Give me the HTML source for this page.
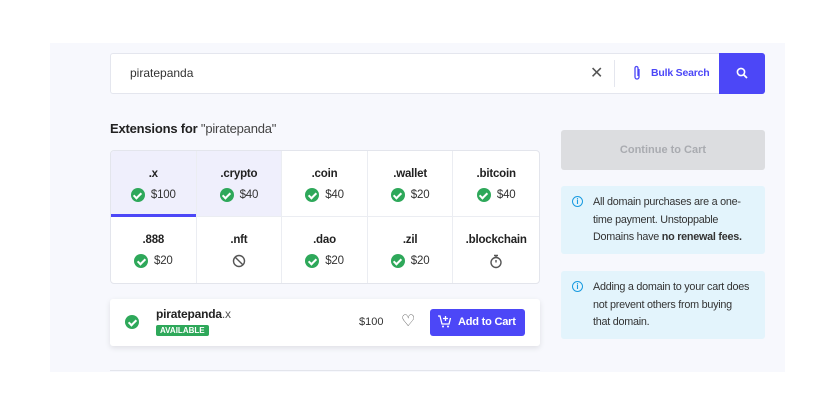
<!DOCTYPE html>
<html><head><style>
*{box-sizing:border-box;margin:0;padding:0}
body{width:827px;height:420px;background:#fff;font-family:"Liberation Sans",sans-serif;position:relative;overflow:hidden;color:#222}
.panel{position:absolute;left:50px;top:43px;width:735px;height:329px;background:#f7f8fd}
.abs{position:absolute}
.search{left:110px;top:53px;width:655px;height:41px;background:#fff;border:1px solid #e4e6ee;border-radius:3px}
.sbtn{left:719px;top:53px;width:46px;height:41px;background:#4c47f7;border-radius:0 3px 3px 0}
.grid{left:110px;top:150px;width:430px;height:134px;background:#fff;border:1px solid #e3e5ec;border-radius:4px;display:grid;grid-template-columns:repeat(5,1fr);grid-template-rows:66px 66px;overflow:hidden}
.c{border-right:1px solid #ebedf2;border-bottom:1px solid #ebedf2;text-align:center;padding-top:17px;font-size:11.5px;font-weight:bold;position:relative;letter-spacing:-0.2px}
.c:nth-child(5n){border-right:none}
.c:nth-child(n+6){border-bottom:none}
.c.sel{background:#efeffc}
.c.u::after{content:"";position:absolute;left:0;right:0;bottom:-1px;height:3px;background:#4c47f7}
.p{margin-top:8px;font-weight:normal;font-size:11.5px;color:#333;display:flex;justify-content:center;align-items:center;gap:6px}
.ck{width:14px;height:14px;border-radius:50%;background:#2ea85a;display:inline-block;position:relative}
.ck::after{content:"";position:absolute;left:4.5px;top:2.5px;width:3px;height:6px;border:solid #fff;border-width:0 2px 2px 0;transform:rotate(45deg)}
.info{background:#e3f4fc;border-radius:3px;left:561px;width:204px;font-size:10.8px;line-height:17.5px;color:#333;padding:8px 6px 0 32px;letter-spacing:-0.25px}
.ii{position:absolute;left:11px;top:10px;width:11px;height:11px;border:1.3px solid #1a9be0;border-radius:50%;font-size:8px;line-height:9px;text-align:center;color:#1a9be0;font-weight:bold;letter-spacing:0}
</style></head><body>
<div class="panel"></div>
<div class="abs search"></div>
<div class="abs" style="left:130px;top:66px;font-size:12px;color:#333">piratepanda</div>
<div class="abs" style="left:590px;top:63px;font-size:16px;color:#555">✕</div>
<div class="abs" style="left:614px;top:60px;width:1px;height:27px;background:#e4e6ee"></div>
<svg class="abs" style="left:632px;top:65px" width="10" height="16" viewBox="0 0 10 16"><path d="M7 4v8a2 2 0 0 1-4 0V3a1.5 1.5 0 0 1 3 0v8" fill="none" stroke="#4c47f7" stroke-width="1.3"/></svg>
<div class="abs" style="left:651px;top:67px;font-size:10.5px;font-weight:bold;color:#4c47f7;letter-spacing:-0.2px">Bulk Search</div>
<div class="abs sbtn"></div>
<svg class="abs" style="left:736px;top:67px" width="12" height="12" viewBox="0 0 12 12"><circle cx="5" cy="5" r="3.6" fill="none" stroke="#fff" stroke-width="1.6"/><path d="M7.7 7.7L11 11" stroke="#fff" stroke-width="1.8"/></svg>
<div class="abs" style="left:110px;top:121px;font-size:13px;font-weight:bold;color:#222;letter-spacing:-0.2px">Extensions for <span style="font-weight:normal;color:#444">"piratepanda"</span></div>
<div class="abs grid">
<div class="c sel u">.x<div class="p"><span class="ck"></span>$100</div></div>
<div class="c sel">.crypto<div class="p"><span class="ck"></span>$40</div></div>
<div class="c">.coin<div class="p"><span class="ck"></span>$40</div></div>
<div class="c">.wallet<div class="p"><span class="ck"></span>$20</div></div>
<div class="c">.bitcoin<div class="p"><span class="ck"></span>$40</div></div>
<div class="c">.888<div class="p"><span class="ck"></span>$20</div></div>
<div class="c">.nft<div class="p"><svg width="14" height="14" viewBox="0 0 14 14"><circle cx="7" cy="7" r="5.5" fill="none" stroke="#555" stroke-width="1.4"/><path d="M3.2 3.2l7.6 7.6" stroke="#555" stroke-width="1.4"/></svg></div></div>
<div class="c">.dao<div class="p"><span class="ck"></span>$20</div></div>
<div class="c">.zil<div class="p"><span class="ck"></span>$20</div></div>
<div class="c">.blockchain<div class="p"><svg width="14" height="15" viewBox="0 0 14 15"><circle cx="7" cy="8.5" r="5" fill="none" stroke="#555" stroke-width="1.4"/><path d="M5 1.5h4M7 1.5v2M7 8.5V6" stroke="#555" stroke-width="1.4"/></svg></div></div>
</div>
<div class="abs" style="left:110px;top:299px;width:430px;height:47px;background:#fff;border-radius:3px;box-shadow:0 2px 6px rgba(0,0,0,.1)"></div>
<span class="abs ck" style="left:125px;top:315px"></span>
<div class="abs" style="left:156px;top:307px;font-size:12px;font-weight:bold;letter-spacing:-0.2px">piratepanda<span style="font-weight:normal;color:#555">.x</span></div>
<div class="abs" style="left:156px;top:325px;background:#2ea85a;color:#fff;font-size:8px;font-weight:bold;padding:1px 4px;border-radius:2px">AVAILABLE</div>
<div class="abs" style="left:359px;top:316px;font-size:11px;color:#333">$100</div>
<div class="abs" style="left:401px;top:311px;font-size:16px;color:#555">♡</div>
<div class="abs" style="left:430px;top:309px;width:95px;height:27px;background:#4c47f7;border-radius:3px;color:#fff;font-size:11px;font-weight:bold;padding:7px 0 0 28px;letter-spacing:-0.2px">Add to Cart</div>
<svg class="abs" style="left:437px;top:314px" width="15" height="15" viewBox="0 0 15 15"><path d="M1 2h2l2 8h7l1.5-6M8.5 2v5M6 4.5h5" fill="none" stroke="#fff" stroke-width="1.3"/><circle cx="6" cy="12.5" r="1" fill="#fff"/><circle cx="11" cy="12.5" r="1" fill="#fff"/></svg>
<div class="abs" style="left:110px;top:370px;width:430px;height:1px;background:#e3e5ec"></div>
<div class="abs" style="left:561px;top:130px;width:204px;height:40px;background:#dcdde0;border-radius:3px;text-align:center;line-height:40px;font-size:11px;font-weight:bold;color:#a9abb0">Continue to Cart</div>
<div class="abs info" style="top:186px;height:68px"><span class="ii">i</span>All domain purchases are a one-time payment. Unstoppable Domains have <b>no renewal fees.</b></div>
<div class="abs info" style="top:271px;height:68px;padding-right:14px"><span class="ii">i</span>Adding a domain to your cart does not prevent others from buying that domain.</div>
</body></html>
